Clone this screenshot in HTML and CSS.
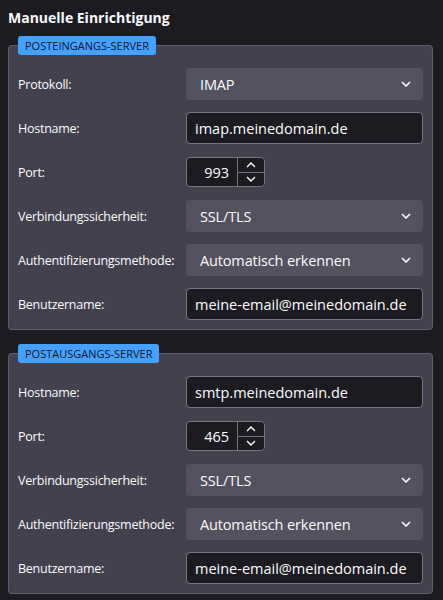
FILE: index.html
```html
<!DOCTYPE html>
<html lang="de">
<head>
<meta charset="utf-8">
<title>Manuelle Einrichtigung</title>
<link rel="stylesheet" href="styles.css">
</head>
<body>
<h1 class="title">Manuelle Einrichtigung</h1>

<fieldset class="server">
  <legend class="server-tag">Posteingangs-Server</legend>
  <div class="form-grid">
    <label class="field-label">Protokoll:</label>
    <div class="dropdown"><span>IMAP</span><svg class="chevron" viewBox="0 0 10 6"><path d="M1 1l4 4 4-4"/></svg></div>

    <label class="field-label">Hostname:</label>
    <input class="text-field" type="text" value="imap.meinedomain.de">

    <label class="field-label">Port:</label>
    <div class="number-field">
      <input class="number-value" type="text" value="993">
      <div class="spinner">
        <button class="spin"><svg viewBox="0 0 10 6"><path d="M1 5l4-4 4 4"/></svg></button>
        <button class="spin"><svg viewBox="0 0 10 6"><path d="M1 1l4 4 4-4"/></svg></button>
      </div>
    </div>

    <label class="field-label">Verbindungssicherheit:</label>
    <div class="dropdown"><span>SSL/TLS</span><svg class="chevron" viewBox="0 0 10 6"><path d="M1 1l4 4 4-4"/></svg></div>

    <label class="field-label">Authentifizierungsmethode:</label>
    <div class="dropdown"><span>Automatisch erkennen</span><svg class="chevron" viewBox="0 0 10 6"><path d="M1 1l4 4 4-4"/></svg></div>

    <label class="field-label">Benutzername:</label>
    <input class="text-field" type="text" value="meine-email@meinedomain.de">
  </div>
</fieldset>

<fieldset class="server">
  <legend class="server-tag">Postausgangs-Server</legend>
  <div class="form-grid">
    <label class="field-label">Hostname:</label>
    <input class="text-field" type="text" value="smtp.meinedomain.de">

    <label class="field-label">Port:</label>
    <div class="number-field">
      <input class="number-value" type="text" value="465">
      <div class="spinner">
        <button class="spin"><svg viewBox="0 0 10 6"><path d="M1 5l4-4 4 4"/></svg></button>
        <button class="spin"><svg viewBox="0 0 10 6"><path d="M1 1l4 4 4-4"/></svg></button>
      </div>
    </div>

    <label class="field-label">Verbindungssicherheit:</label>
    <div class="dropdown"><span>SSL/TLS</span><svg class="chevron" viewBox="0 0 10 6"><path d="M1 1l4 4 4-4"/></svg></div>

    <label class="field-label">Authentifizierungsmethode:</label>
    <div class="dropdown"><span>Automatisch erkennen</span><svg class="chevron" viewBox="0 0 10 6"><path d="M1 1l4 4 4-4"/></svg></div>

    <label class="field-label">Benutzername:</label>
    <input class="text-field" type="text" value="meine-email@meinedomain.de">
  </div>
</fieldset>
</body>
</html>
```

FILE: styles.css
```css
html, body {
  background: #1c1b22;
}

body {
  margin: 8px 10px 8px 8px;
  color: #fbfbfe;
  font-family: "Open Sans", "Noto Sans", sans-serif;
}

.title {
  margin: 0 0 8px;
  font-size: 14px;
  line-height: 20px;
  font-weight: 700;
}

.server {
  margin: 0;
  padding: 13px 9px 9px;
  background: #42414d;
  border: 1px solid #5f5e6a;
  border-radius: 4px;
  min-width: 0;
}

.server + .server {
  margin-top: 14px;
}

.server-tag {
  padding: 0 7px;
  margin: 0;
  height: 19px;
  line-height: 19px;
  background: #45a1ff;
  color: #15141a;
  border-radius: 3px;
  font-size: 11px;
  text-transform: uppercase;
}

.form-grid {
  display: grid;
  grid-template-columns: 168px 1fr;
  grid-auto-rows: 32px;
  row-gap: 12px;
  align-items: center;
}

.field-label {
  font-size: 12.5px;
  letter-spacing: -0.25px;
}

.dropdown {
  height: 32px;
  box-sizing: border-box;
  display: flex;
  align-items: center;
  justify-content: space-between;
  padding: 0 12px 0 14px;
  background: #53525e;
  border-radius: 4px;
  font-size: 14.5px;
  letter-spacing: -0.15px;
}

.chevron {
  width: 10px;
  height: 6px;
  fill: none;
  stroke: #fbfbfe;
  stroke-width: 1.6;
}

.text-field {
  height: 32px;
  box-sizing: border-box;
  width: 100%;
  margin: 0;
  padding: 0 8px;
  background: #1c1b22;
  color: #fbfbfe;
  border: 1px solid #76757f;
  border-radius: 4px;
  font-family: inherit;
  font-size: 14.5px;
  outline: none;
}

.number-field {
  display: flex;
  width: 79px;
  height: 30px;
  box-sizing: border-box;
  border: 1px solid #76757f;
  border-radius: 4px;
  background: #1c1b22;
  overflow: hidden;
}

.number-value {
  width: 50px;
  box-sizing: border-box;
  margin: 0;
  padding: 0 8px 0 0;
  border: none;
  background: transparent;
  color: #fbfbfe;
  text-align: right;
  font-family: inherit;
  font-size: 14.5px;
  outline: none;
}

.spinner {
  display: flex;
  flex-direction: column;
  flex: 1;
  border-left: 1px solid #76757f;
}

.spin {
  flex: 1;
  display: flex;
  align-items: center;
  justify-content: center;
  margin: 0;
  padding: 0;
  background: transparent;
  border: none;
}

.spin + .spin {
  border-top: 1px solid #76757f;
}

.spin svg {
  width: 10px;
  height: 6px;
  fill: none;
  stroke: #fbfbfe;
  stroke-width: 1.4;
}
```
